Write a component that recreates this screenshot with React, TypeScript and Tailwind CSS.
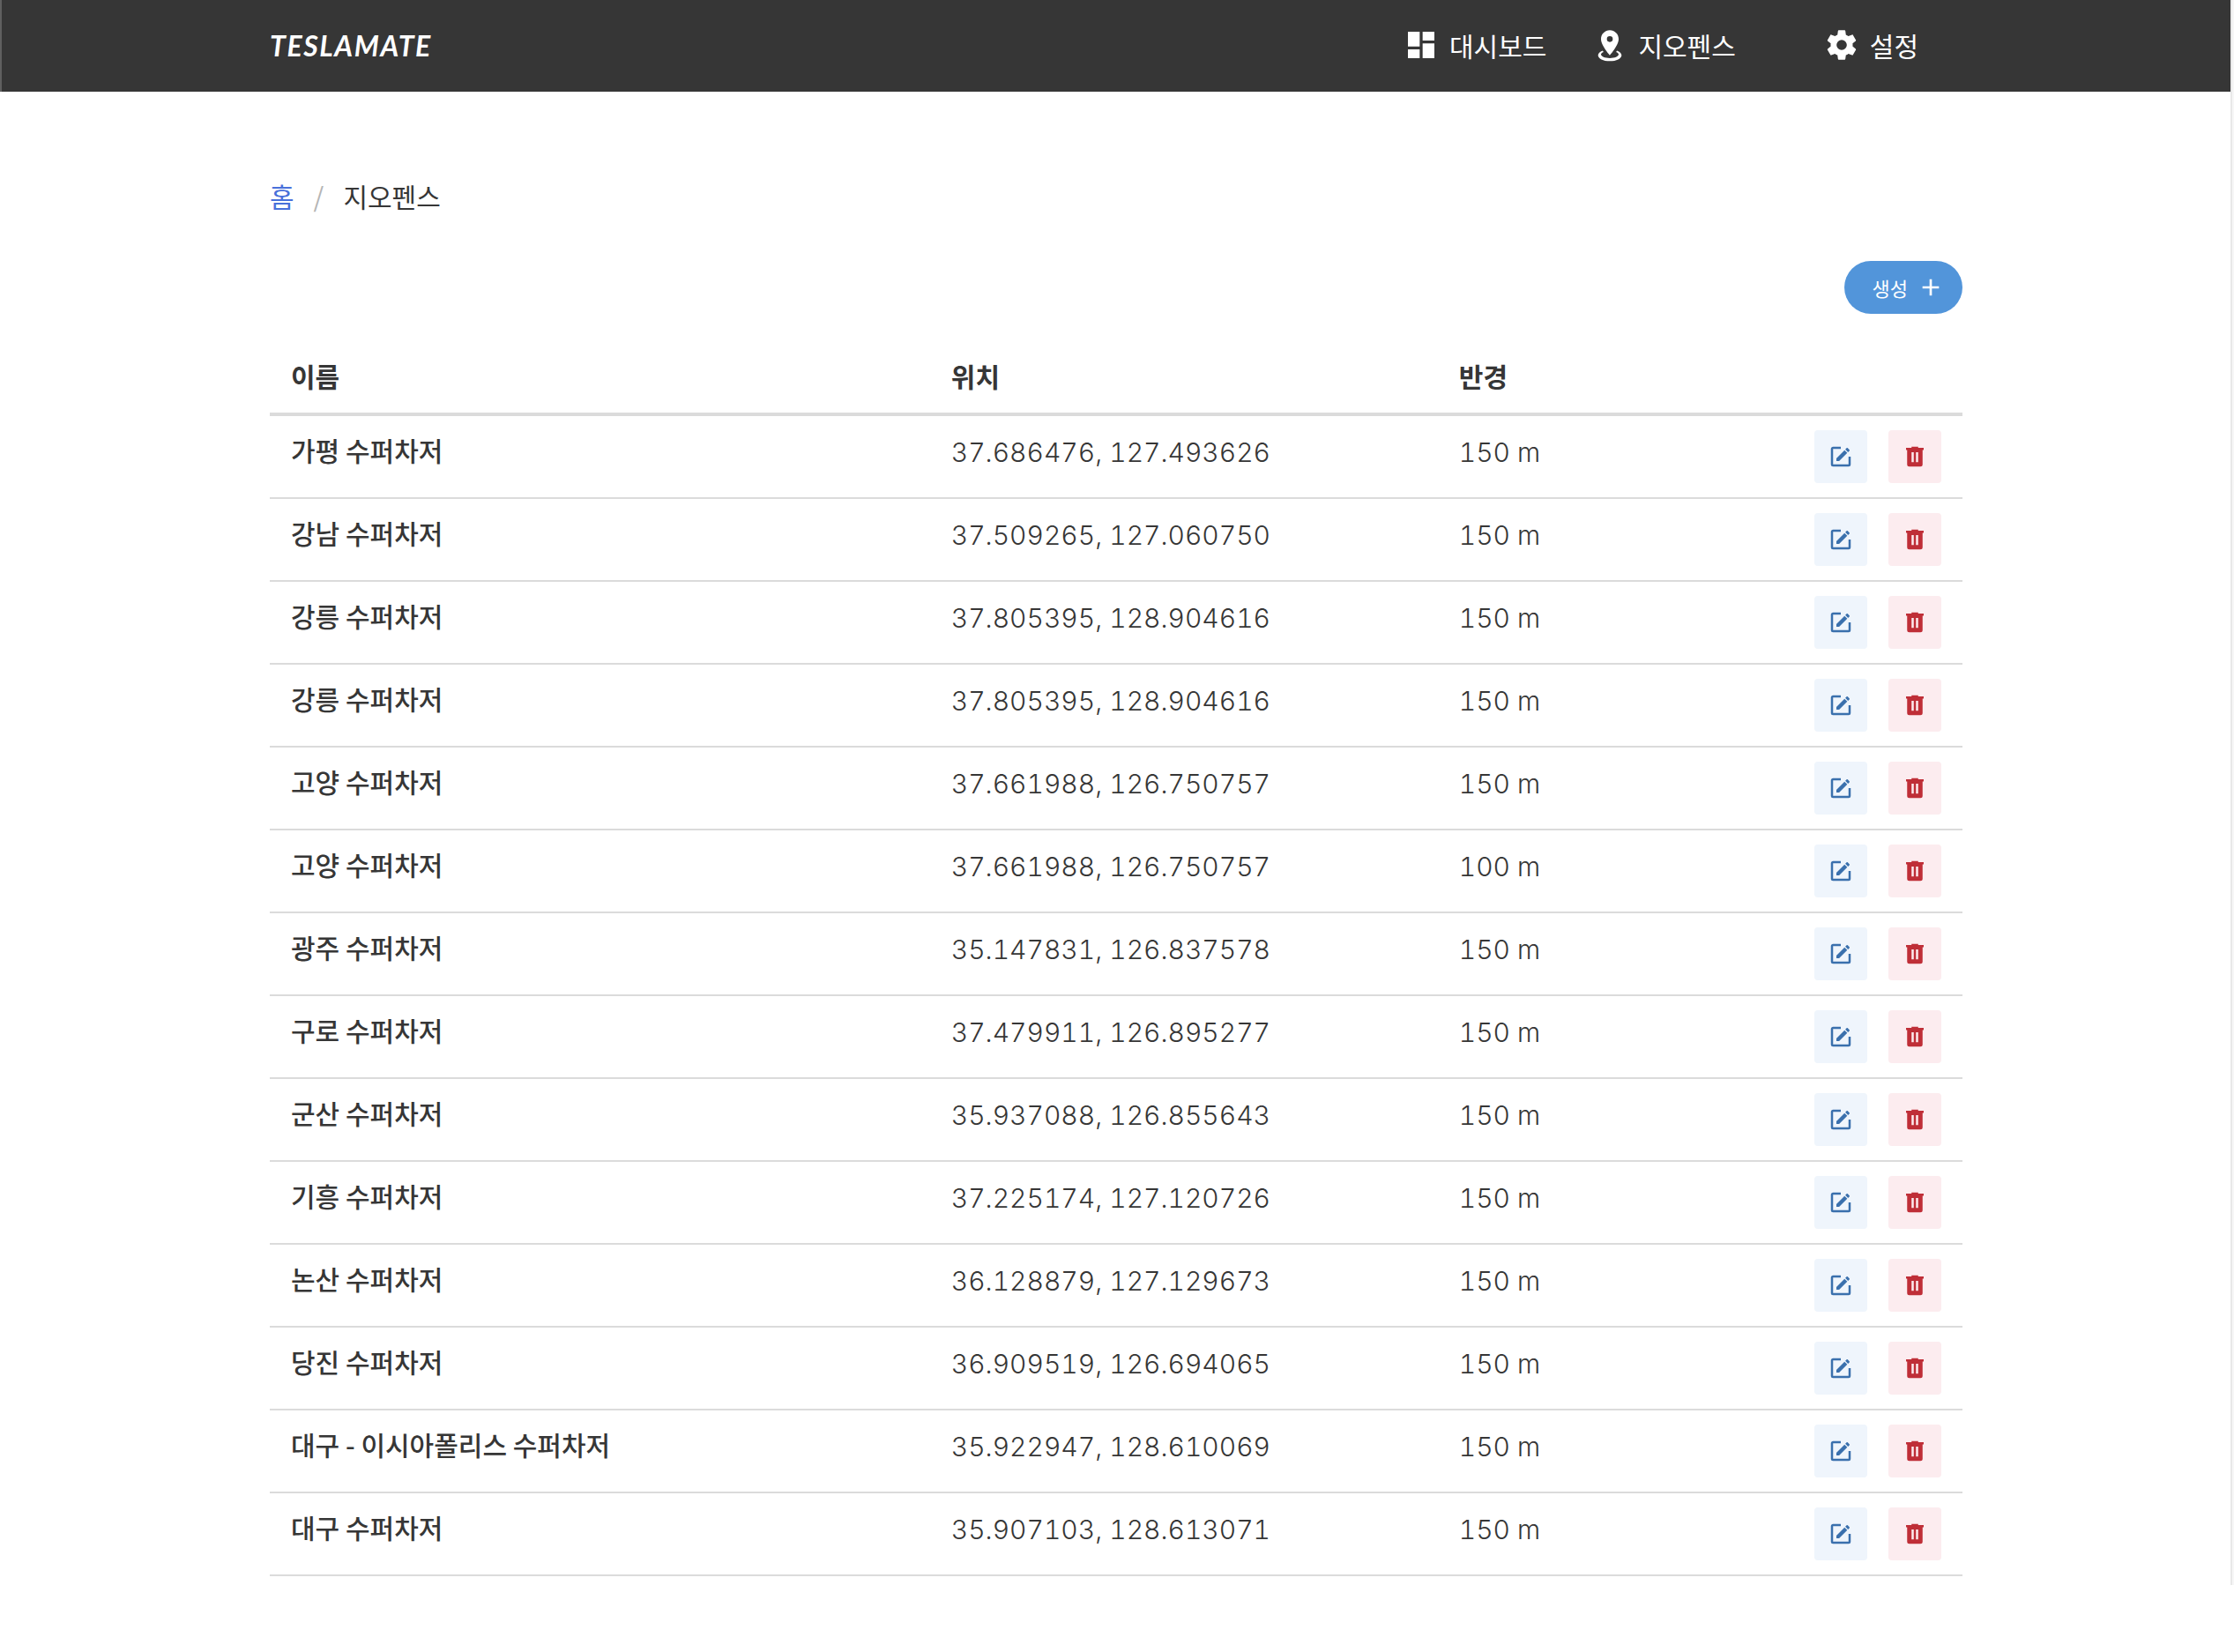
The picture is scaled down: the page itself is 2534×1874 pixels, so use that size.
import clsx from "clsx";

interface Geofence {
  id: number;
  name: string;
  position: string;
  radius: string;
}

const geofences: Geofence[] = [
  { id: 1, name: "가평 수퍼차저", position: "37.686476, 127.493626", radius: "150 m" },
  { id: 2, name: "강남 수퍼차저", position: "37.509265, 127.060750", radius: "150 m" },
  { id: 3, name: "강릉 수퍼차저", position: "37.805395, 128.904616", radius: "150 m" },
  { id: 4, name: "강릉 수퍼차저", position: "37.805395, 128.904616", radius: "150 m" },
  { id: 5, name: "고양 수퍼차저", position: "37.661988, 126.750757", radius: "150 m" },
  { id: 6, name: "고양 수퍼차저", position: "37.661988, 126.750757", radius: "100 m" },
  { id: 7, name: "광주 수퍼차저", position: "35.147831, 126.837578", radius: "150 m" },
  { id: 8, name: "구로 수퍼차저", position: "37.479911, 126.895277", radius: "150 m" },
  { id: 9, name: "군산 수퍼차저", position: "35.937088, 126.855643", radius: "150 m" },
  { id: 10, name: "기흥 수퍼차저", position: "37.225174, 127.120726", radius: "150 m" },
  { id: 11, name: "논산 수퍼차저", position: "36.128879, 127.129673", radius: "150 m" },
  { id: 12, name: "당진 수퍼차저", position: "36.909519, 126.694065", radius: "150 m" },
  { id: 13, name: "대구 - 이시아폴리스 수퍼차저", position: "35.922947, 128.610069", radius: "150 m" },
  { id: 14, name: "대구 수퍼차저", position: "35.907103, 128.613071", radius: "150 m" },
];

const icons = {
  dashboard: "M13,3V9H21V3M13,21H21V11H13M3,21H11V15H3M3,13H11V3H3V13Z",
  marker:
    "M12,2C15.31,2 18,4.66 18,7.95C18,12.41 12,19 12,19C12,19 6,12.41 6,7.95C6,4.66 8.69,2 12,2M12,6A2,2 0 0,0 10,8A2,2 0 0,0 12,10A2,2 0 0,0 14,8A2,2 0 0,0 12,6M20,19C20,21.21 16.42,23 12,23C7.58,23 4,21.21 4,19C4,17.71 5.22,16.56 7.11,15.83L7.75,16.74C6.67,17.19 6,17.81 6,18.5C6,19.88 8.69,21 12,21C15.31,21 18,19.88 18,18.5C18,17.81 17.33,17.19 16.25,16.74L16.89,15.83C18.78,16.56 20,17.71 20,19Z",
  cog: "M12,15.5A3.5,3.5 0 0,1 8.5,12A3.5,3.5 0 0,1 12,8.5A3.5,3.5 0 0,1 15.5,12A3.5,3.5 0 0,1 12,15.5M19.43,12.97C19.47,12.65 19.5,12.33 19.5,12C19.5,11.67 19.47,11.34 19.43,11L21.54,9.37C21.73,9.22 21.78,8.95 21.66,8.73L19.66,5.27C19.54,5.05 19.27,4.96 19.05,5.05L16.56,6.05C16.04,5.66 15.5,5.32 14.87,5.07L14.5,2.42C14.46,2.18 14.25,2 14,2H10C9.75,2 9.54,2.18 9.5,2.42L9.13,5.07C8.5,5.32 7.96,5.66 7.44,6.05L4.95,5.05C4.73,4.96 4.46,5.05 4.34,5.27L2.34,8.73C2.21,8.95 2.27,9.22 2.46,9.37L4.57,11C4.53,11.34 4.5,11.67 4.5,12C4.5,12.33 4.53,12.65 4.57,12.97L2.46,14.63C2.27,14.78 2.21,15.05 2.34,15.27L4.34,18.73C4.46,18.95 4.73,19.03 4.95,18.95L7.44,17.94C7.96,18.34 8.5,18.68 9.13,18.93L9.5,21.58C9.54,21.82 9.75,22 10,22H14C14.25,22 14.46,21.82 14.5,21.58L14.87,18.93C15.5,18.67 16.04,18.34 16.56,17.94L19.05,18.95C19.27,19.03 19.54,18.95 19.66,18.73L21.66,15.27C21.78,15.05 21.73,14.78 21.54,14.63L19.43,12.97Z",
  plus: "M19,13H13V19H11V13H5V11H11V5H13V11H19V13Z",
  edit: "M5,3C3.89,3 3,3.89 3,5V19A2,2 0 0,0 5,21H19A2,2 0 0,0 21,19V12H19V19H5V5H12V3H5M17.78,4C17.61,4 17.43,4.07 17.3,4.2L16.08,5.41L18.58,7.91L19.8,6.7C20.06,6.44 20.06,6 19.8,5.75L18.25,4.2C18.12,4.07 17.95,4 17.78,4M15.37,6.12L8,13.5V16H10.5L17.87,8.62L15.37,6.12Z",
  trash:
    "M9,3V4H4V6H5V19A2,2 0 0,0 7,21H17A2,2 0 0,0 19,19V6H20V4H15V3H9M9,8H11V17H9V8M13,8H15V17H13V8Z",
};

function Icon({ name, className }: { name: keyof typeof icons; className?: string }) {
  return (
    <svg
      viewBox="0 0 24 24"
      fill="currentColor"
      aria-hidden="true"
      className={clsx("shrink-0", className)}
    >
      <path d={icons[name]} />
    </svg>
  );
}

function Navbar() {
  return (
    <nav className="h-26 bg-[#363636] border-l-2 border-[#606060]">
      <div className="max-w-[1920px] h-full mx-auto flex items-center justify-between text-white">
        <a href="#" className="font-['Lato',sans-serif] text-[32px] font-bold italic tracking-wider">
          TESLAMATE
        </a>
        <div className="flex items-center pr-[50px] pb-0.5">
          <a href="#" className="flex items-center gap-3">
            <Icon name="dashboard" className="size-10" />
            대시보드
          </a>
          <a href="#" className="flex items-center gap-3 ml-13">
            <Icon name="marker" className="size-10" />
            지오펜스
          </a>
          <a href="#" className="flex items-center gap-3 ml-25">
            <Icon name="cog" className="size-10" />
            설정
          </a>
        </div>
      </div>
    </nav>
  );
}

function GeofenceRow({ geofence }: { geofence: Geofence }) {
  return (
    <tr className="align-top">
      <td className="px-6 py-4 border-b-2 border-[#dbdbdb] font-medium leading-11">
        {geofence.name}
      </td>
      <td className="px-6 py-4 border-b-2 border-[#dbdbdb] font-['Inter',sans-serif] font-light tabular-nums leading-[50px]">
        {geofence.position}
      </td>
      <td className="px-6 py-4 border-b-2 border-[#dbdbdb] font-['Inter',sans-serif] font-light tabular-nums leading-[50px]">
        {geofence.radius}
      </td>
      <td className="px-6 py-4 border-b-2 border-[#dbdbdb]">
        <div className="flex justify-end gap-6">
          <button
            type="button"
            aria-label="편집"
            className="size-15 flex items-center justify-center rounded bg-[#eff5fc] text-[#3a70ad]"
          >
            <Icon name="edit" className="size-[30px]" />
          </button>
          <button
            type="button"
            aria-label="삭제"
            className="size-15 flex items-center justify-center rounded bg-[#fcecef] text-[#bf2e37]"
          >
            <Icon name="trash" className="size-[30px]" />
          </button>
        </div>
      </td>
    </tr>
  );
}

export default function App() {
  return (
    <div className="min-h-screen flex bg-white text-[#363636] font-['Noto_Sans_CJK_KR',sans-serif] text-[30px] leading-12">
      <div className="flex-1">
        <Navbar />
        <div className="pl-0.5">
          <main className="max-w-[1920px] mx-auto pt-24">
            <nav aria-label="breadcrumbs" className="flex gap-[22px] leading-11">
              <a href="#" className="text-[#4870da]">
                홈
              </a>
              <span className="text-[#b5b5b5]">/</span>
              <a href="#" aria-current="page">
                지오펜스
              </a>
            </nav>

            <div className="flex justify-end mt-13">
              <button
                type="button"
                className="h-15 flex items-center gap-2.5 pl-8 pr-5 rounded-full bg-[#5295da] text-white text-[22px]"
              >
                생성
                <Icon name="plus" className="size-8" />
              </button>
            </div>

            <table className="w-full mt-8 table-fixed border-separate border-spacing-0">
              <colgroup>
                <col className="w-[39%]" />
                <col className="w-[30%]" />
                <col className="w-[18%]" />
                <col className="w-[13%]" />
              </colgroup>
              <thead>
                <tr className="text-left leading-11">
                  <th className="px-6 pt-4 pb-5 border-b-4 border-[#dbdbdb] font-bold">이름</th>
                  <th className="px-6 pt-4 pb-5 border-b-4 border-[#dbdbdb] font-bold">위치</th>
                  <th className="px-6 pt-4 pb-5 border-b-4 border-[#dbdbdb] font-bold">반경</th>
                  <th className="px-6 pt-4 pb-5 border-b-4 border-[#dbdbdb]" />
                </tr>
              </thead>
              <tbody>
                {geofences.map((geofence) => (
                  <GeofenceRow key={geofence.id} geofence={geofence} />
                ))}
              </tbody>
            </table>
          </main>
        </div>
      </div>

      {/* Scroll track */}
      <div className="w-1 mb-19 bg-[#f7f7f7] border-l-2 border-[#e8e8e8]" />
    </div>
  );
}
